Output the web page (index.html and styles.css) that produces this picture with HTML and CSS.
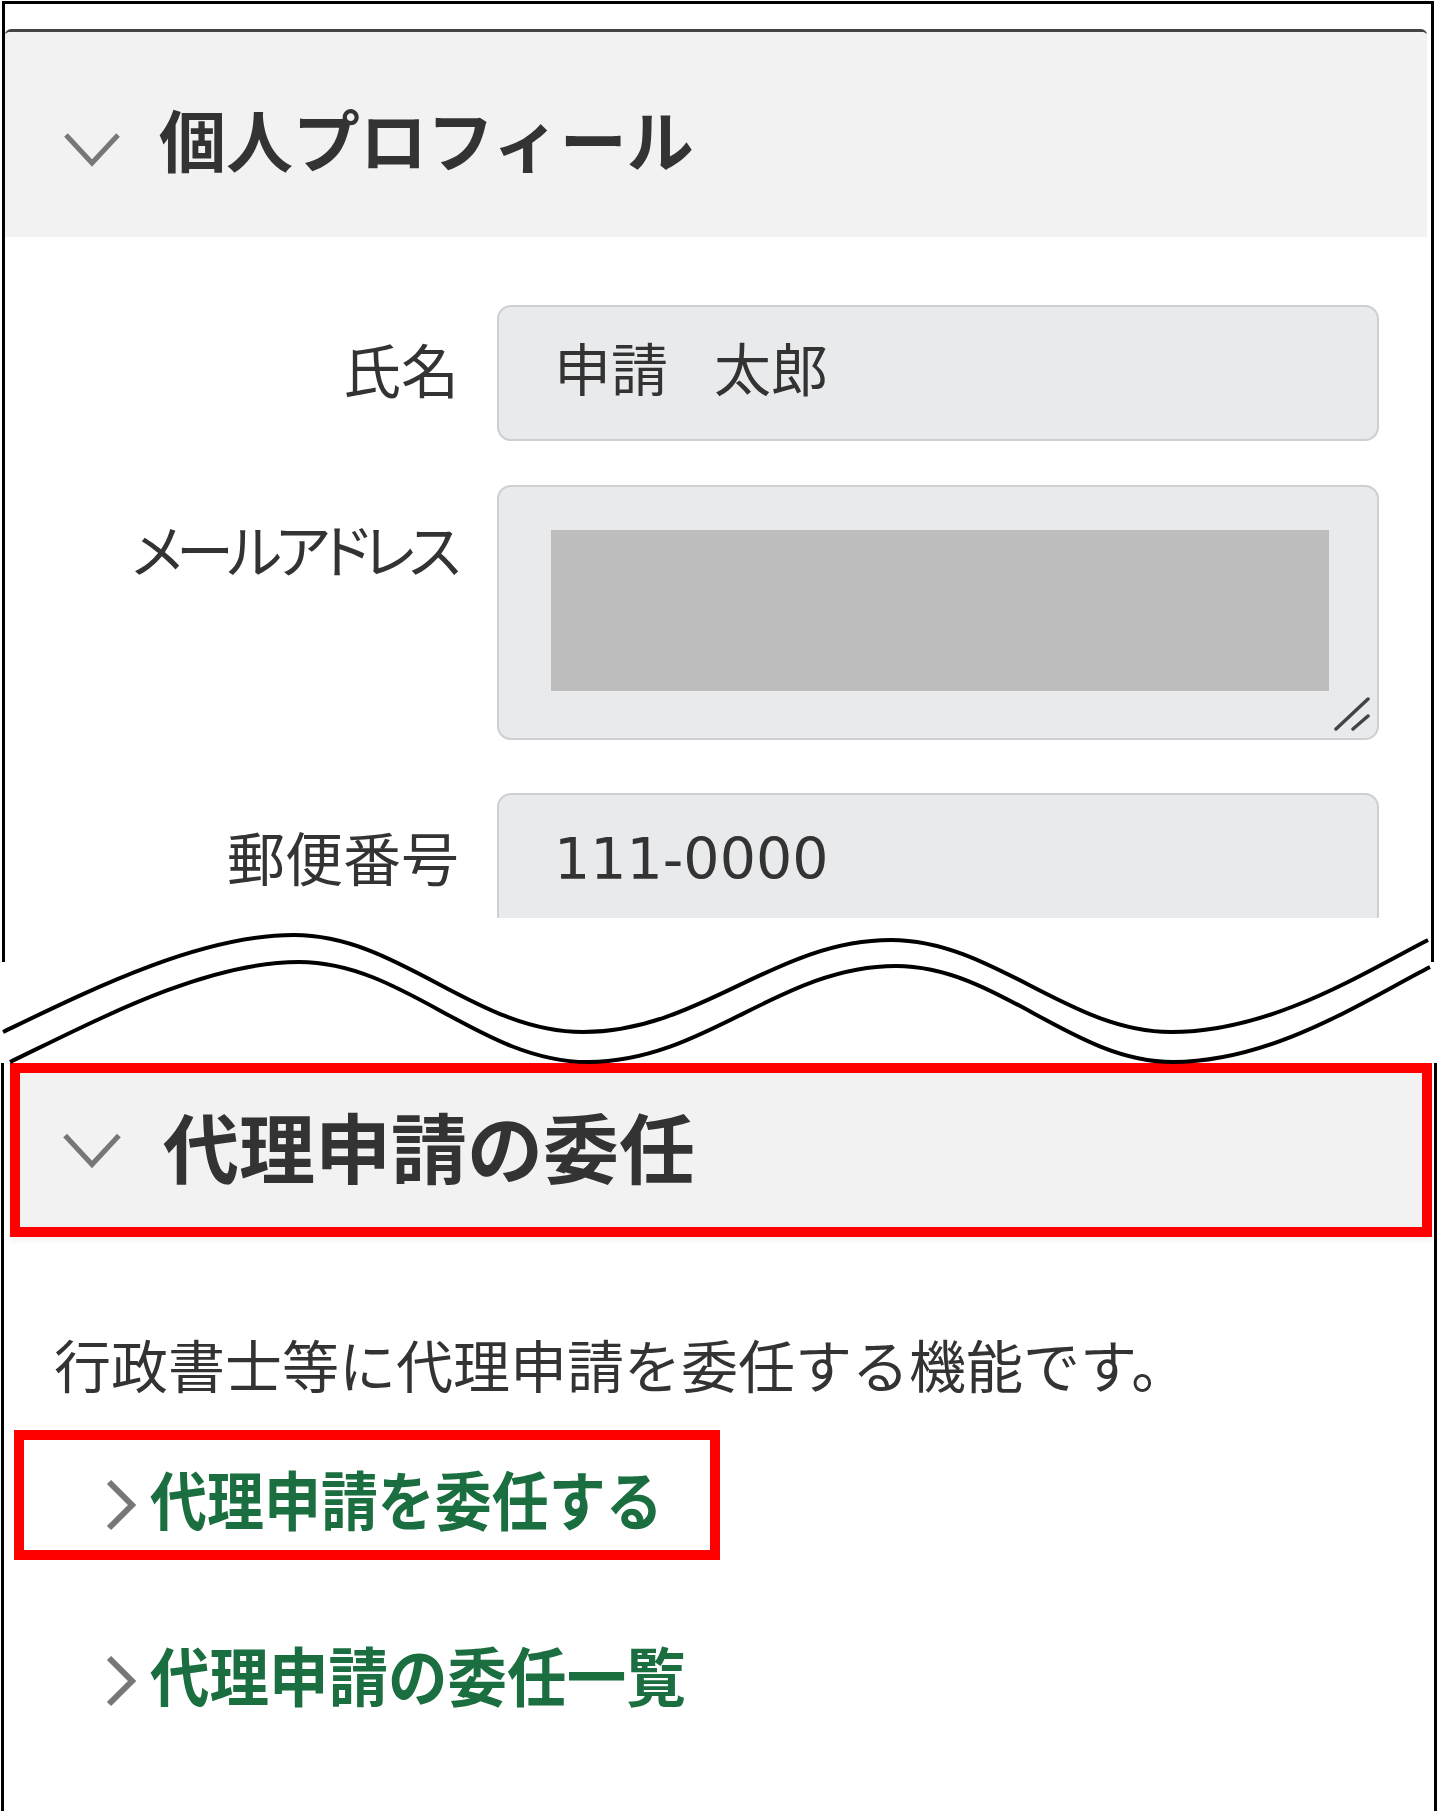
FILE: index.html
```html
<!DOCTYPE html>
<html lang="ja">

<head>
  <meta charset="utf-8">
  <meta name="viewport" content="width=device-width">
  <title>代理申請の委任</title>
  <link rel="stylesheet" href="styles.css">
</head>

<body>
  <div class="sheet">
    <section class="shot shot-upper">
      <div class="panel">
        <div class="panel-head">
          <svg class="caret" viewBox="0 0 58 35" width="58" height="35">
            <polyline points="3,3 29,31 55,3" />
          </svg>
          <h2>個人プロフィール</h2>
        </div>
        <div class="profile">
          <div class="field">
            <label>氏名</label>
            <div class="input">申請 太郎</div>
          </div>
          <div class="field field-tall">
            <label class="label-kana">メールアドレス</label>
            <div class="input textarea">
              <div class="masked"></div>
              <svg class="grip" viewBox="0 0 36 36" width="36" height="36">
                <line x1="2" y1="34" x2="34" y2="4" />
                <line x1="19" y1="34" x2="34" y2="21" />
              </svg>
            </div>
          </div>
          <div class="field">
            <label>郵便番号</label>
            <div class="input">111-0000</div>
          </div>
        </div>
      </div>
    </section>

    <!-- break mark between the two screenshots -->
    <div class="cut">
      <svg viewBox="0 928 1440 142" width="1440" height="142">
        <path d="M3,1032 C90,990 200,935 294,935 C400,935 475,1032 583,1032 C700,1032 775,940 891,940 C993,940 1069,1032 1171,1032 C1270,1032 1360,975 1428,940" />
        <path d="M10,1062 C97,1020 205,962 299,962 C405,962 480,1062 588,1062 C705,1062 780,966 896,966 C998,966 1072,1062 1173,1062 C1272,1062 1362,1002 1430,967" />
      </svg>
    </div>

    <section class="shot shot-lower">
      <div class="panel-head is-marked">
        <svg class="caret" viewBox="0 0 58 35" width="60" height="37">
          <polyline points="3,3 29,31 55,3" />
        </svg>
        <h2>代理申請の委任</h2>
      </div>
      <p class="lead">行政書士等に代理申請を委任する機能です。</p>
      <ul class="links">
        <li class="is-marked">
          <svg class="arrow" viewBox="0 0 34 54" width="34" height="54">
            <polyline points="6,4 29,27 6,50" />
          </svg>
          <a href="#">代理申請を委任する</a>
        </li>
        <li>
          <svg class="arrow" viewBox="0 0 34 54" width="34" height="54">
            <polyline points="6,4 29,27 6,50" />
          </svg>
          <a href="#">代理申請の委任一覧</a>
        </li>
      </ul>
    </section>
  </div>
</body>

</html>
```

FILE: styles.css
```css
/* Reset default styles */
body,
h2,
p,
ul {
  margin: 0;
  padding: 0;
}

* {
  box-sizing: border-box;
}

body {
  background-color: #ffffff;
  font-family: "Noto Sans CJK JP", sans-serif;
  color: #333333;
}

.sheet {
  width: 1440px;
}

/* Black frames round each screenshot */
.shot-upper {
  margin: 1px 0 0 2px;
  width: 1432px;
  height: 961px;
  border: 3px solid #000000;
  border-bottom: none;
}

.shot-lower {
  margin-left: 1px;
  width: 1436px;
  height: 778px;
  border: 3px solid #000000;
  border-top: none;
}

/* Profile panel */
.panel {
  margin: 25px 4px 0 0;
  height: 889px;
  border-top: 3px solid #444444;
  border-radius: 6px 6px 0 0;
  overflow: hidden;
}

.panel-head {
  display: flex;
  align-items: center;
  height: 205px;
  padding-left: 58px;
  background-color: #f2f2f2;
}

.panel-head h2 {
  font-size: 67px;
  font-weight: 700;
  line-height: 1;
  padding-top: 6px;
  margin-left: 38px;
  color: #333333;
}

.caret {
  flex: none;
  margin-top: 29px;
}

.caret polyline {
  fill: none;
  stroke: #777777;
  stroke-width: 5;
}

.profile {
  padding-top: 68px;
}

.field {
  display: grid;
  grid-template-columns: 454px 882px;
  column-gap: 38px;
  margin-bottom: 44px;
}

.field-tall {
  margin-bottom: 53px;
}

.field label {
  text-align: right;
  font-size: 58px;
  line-height: 80px;
  padding-top: 23px;
  white-space: nowrap;
}

/* narrow kana, as in the screenshot */
.field .label-kana {
  font-feature-settings: "palt";
  letter-spacing: -6px;
  padding-right: 4px;
}

.input {
  height: 136px;
  padding: 24px 0 0 55px;
  background-color: #e9eaec;
  border: 2px solid #cdcfd2;
  border-radius: 14px;
  font-family: "DejaVu Sans", "Noto Sans CJK JP", sans-serif;
  font-size: 57px;
  line-height: 80px;
  word-spacing: 28px;
  color: #333333;
}

.textarea {
  position: relative;
  height: 255px;
  padding: 43px 0 0 52px;
}

.masked {
  width: 778px;
  height: 161px;
  background-color: #bdbdbd;
}

.grip {
  position: absolute;
  right: 7px;
  bottom: 7px;
}

.grip line {
  stroke: #444444;
  stroke-width: 3.5;
  stroke-linecap: round;
}

/* Wavy break */
.cut {
  position: relative;
  height: 70px;
  z-index: 1;
}

.cut svg {
  position: absolute;
  left: 0;
  top: -34px;
}

.cut path {
  fill: none;
  stroke: #000000;
  stroke-width: 4;
}

/* Red annotation boxes */
.shot-lower .panel-head {
  margin: 31px 2px 0 6px;
  height: 174px;
  padding-left: 42px;
  box-shadow: 0 4px 6px rgba(0, 0, 0, 0.05);
}

.panel-head.is-marked {
  border: 10px solid #ff0000;
}

.shot-lower .caret {
  margin-top: 0;
}

.shot-lower .panel-head h2 {
  font-size: 76px;
  margin-left: 41px;
  padding-top: 0;
  padding-bottom: 10px;
}

.lead {
  margin: 86px 0 0 50px;
  font-size: 57px;
  line-height: 80px;
  color: #333333;
  white-space: nowrap;
}

.links {
  list-style: none;
  margin: 37px 0 0 20px;
}

.links li {
  display: flex;
  align-items: center;
  width: 686px;
  height: 110px;
  padding-left: 79px;
}

.links li+li {
  margin-top: 66px;
}

.links li.is-marked {
  outline: 10px solid #ff0000;
}

.arrow {
  flex: none;
  margin: 20px 13px 0 0;
}

.arrow polyline {
  fill: none;
  stroke: #777777;
  stroke-width: 6;
}

.links a {
  display: inline-block;
  padding-top: 3px;
  font-size: 64px;
  font-weight: 700;
  line-height: 1;
  color: #1b6e3f;
  text-decoration: none;
  white-space: nowrap;
  transform: scaleX(0.89);
  transform-origin: left center;
}

.links li+li a {
  transform: scaleX(0.93);
}
```
